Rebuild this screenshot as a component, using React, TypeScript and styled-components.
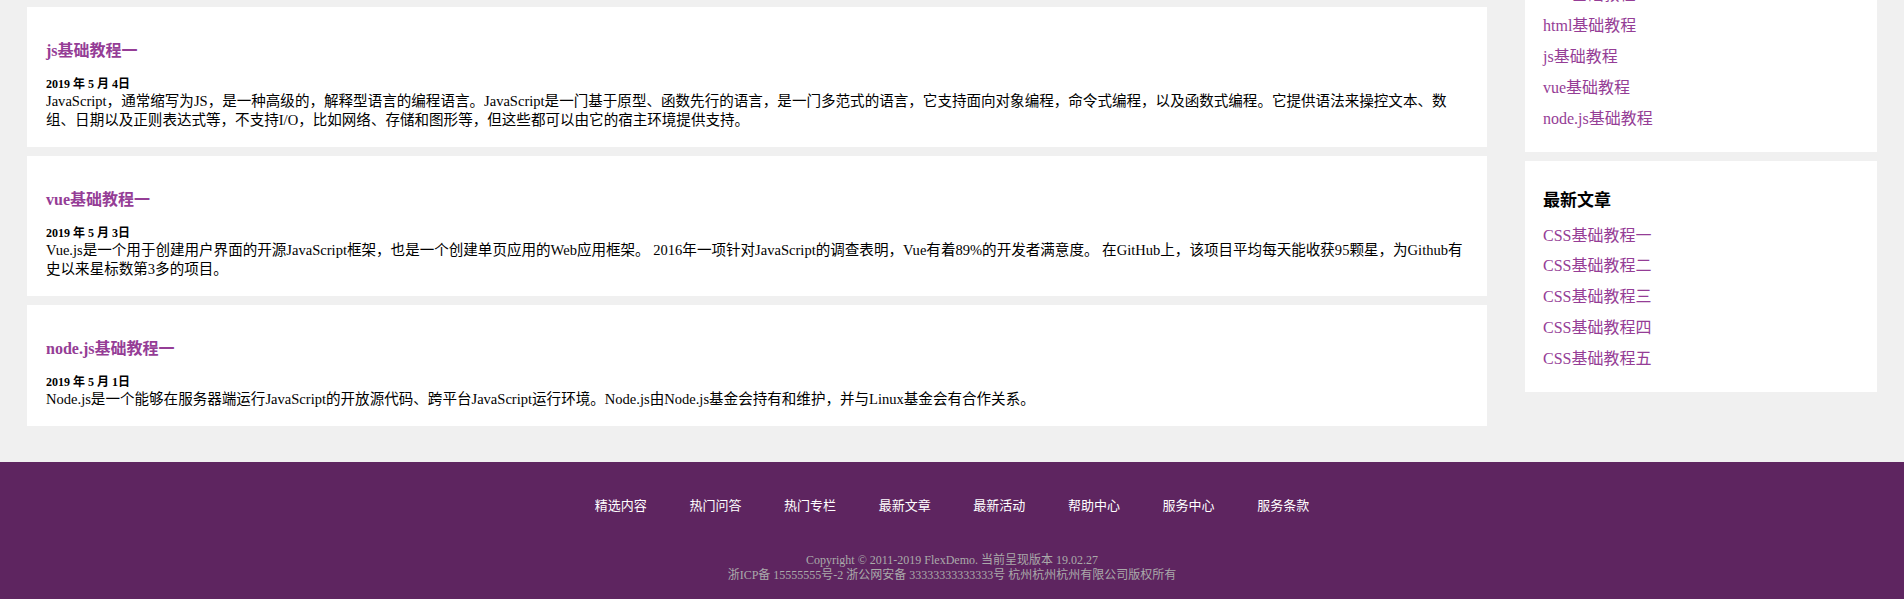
import React from "react";
import styled, { createGlobalStyle } from "styled-components";

const GlobalStyle = createGlobalStyle`
  html, body {
    margin: 0;
    padding: 0;
    background: #f0f0f0;
    font-family: "Liberation Serif", "Noto Sans CJK SC", serif;
    color: #000;
  }
  * { box-sizing: border-box; }
`;

const purple = "#953d96";

const Page = styled.div`
  display: flex;
  flex-direction: column;
`;

const Content = styled.div`
  display: flex;
  align-items: flex-start;
  gap: 38px;
  padding: 7px 27px 0;
`;

const MainColumn = styled.main`
  flex: 1;
  display: flex;
  flex-direction: column;
  gap: 9px;
`;

const ArticleCard = styled.article`
  background: #fff;
  padding: 34px 19px 17px;
`;

const ArticleTitle = styled.a`
  display: block;
  margin: 0 0 15px;
  font-size: 16px;
  font-weight: bold;
  line-height: 20px;
  color: ${purple};
  text-decoration: none;
`;

const ArticleDate = styled.div`
  font-size: 12px;
  font-weight: bold;
  line-height: 16px;
`;

const ArticleText = styled.p`
  margin: 0;
  font-size: 14.55px;
  line-height: 19px;
`;

const Sidebar = styled.aside`
  width: 352px;
  flex-shrink: 0;
  margin-top: -87px;
  display: flex;
  flex-direction: column;
  gap: 9px;
`;

const Widget = styled.section`
  background: #fff;
  padding: 28px 18px 17px;
`;

const WidgetTitle = styled.h3`
  margin: 0 0 8px;
  font-size: 17px;
  font-weight: bold;
  line-height: 24px;
  color: #000;
`;

const WidgetLink = styled.a`
  display: block;
  font-size: 16px;
  line-height: 30.9px;
  color: ${purple};
  text-decoration: none;
`;

const Footer = styled.footer`
  margin-top: 36px;
  background: #5e2560;
  padding: 35px 0 16.5px;
`;

const FooterNav = styled.nav`
  display: flex;
  justify-content: center;
  gap: 42.6px;
`;

const FooterLink = styled.a`
  font-size: 13px;
  line-height: 18px;
  color: #fff;
  text-decoration: none;
`;

const Copyright = styled.div`
  margin-top: 37.5px;
  font-size: 12px;
  line-height: 15px;
  color: #aaa;
  text-align: center;
`;

const articles = [
  {
    title: "js基础教程一",
    date: "2019 年 5 月 4日",
    text: "JavaScript，通常缩写为JS，是一种高级的，解释型语言的编程语言。JavaScript是一门基于原型、函数先行的语言，是一门多范式的语言，它支持面向对象编程，命令式编程，以及函数式编程。它提供语法来操控文本、数组、日期以及正则表达式等，不支持I/O，比如网络、存储和图形等，但这些都可以由它的宿主环境提供支持。",
  },
  {
    title: "vue基础教程一",
    date: "2019 年 5 月 3日",
    text: "Vue.js是一个用于创建用户界面的开源JavaScript框架，也是一个创建单页应用的Web应用框架。 2016年一项针对JavaScript的调查表明，Vue有着89%的开发者满意度。 在GitHub上，该项目平均每天能收获95颗星，为Github有史以来星标数第3多的项目。",
  },
  {
    title: "node.js基础教程一",
    date: "2019 年 5 月 1日",
    text: "Node.js是一个能够在服务器端运行JavaScript的开放源代码、跨平台JavaScript运行环境。Node.js由Node.js基金会持有和维护，并与Linux基金会有合作关系。",
  },
];

const hotLinks = ["CSS基础教程", "html基础教程", "js基础教程", "vue基础教程", "node.js基础教程"];
const newLinks = ["CSS基础教程一", "CSS基础教程二", "CSS基础教程三", "CSS基础教程四", "CSS基础教程五"];
const footerLinks = ["精选内容", "热门问答", "热门专栏", "最新文章", "最新活动", "帮助中心", "服务中心", "服务条款"];

export default function App() {
  return (
    <Page>
      <GlobalStyle />
      <Content>
        <MainColumn>
          {articles.map((a) => (
            <ArticleCard key={a.title}>
              <ArticleTitle href="#">{a.title}</ArticleTitle>
              <ArticleDate>{a.date}</ArticleDate>
              <ArticleText>{a.text}</ArticleText>
            </ArticleCard>
          ))}
        </MainColumn>
        <Sidebar>
          <Widget>
            <WidgetTitle>热门教程</WidgetTitle>
            {hotLinks.map((l) => (
              <WidgetLink key={l} href="#">{l}</WidgetLink>
            ))}
          </Widget>
          <Widget>
            <WidgetTitle>最新文章</WidgetTitle>
            {newLinks.map((l) => (
              <WidgetLink key={l} href="#">{l}</WidgetLink>
            ))}
          </Widget>
        </Sidebar>
      </Content>
      <Footer>
        <FooterNav>
          {footerLinks.map((l) => (
            <FooterLink key={l} href="#">{l}</FooterLink>
          ))}
        </FooterNav>
        <Copyright>
          Copyright © 2011-2019 FlexDemo. 当前呈现版本 19.02.27
          <br />
          浙ICP备 15555555号-2 浙公网安备 33333333333333号 杭州杭州杭州有限公司版权所有
        </Copyright>
      </Footer>
    </Page>
  );
}
